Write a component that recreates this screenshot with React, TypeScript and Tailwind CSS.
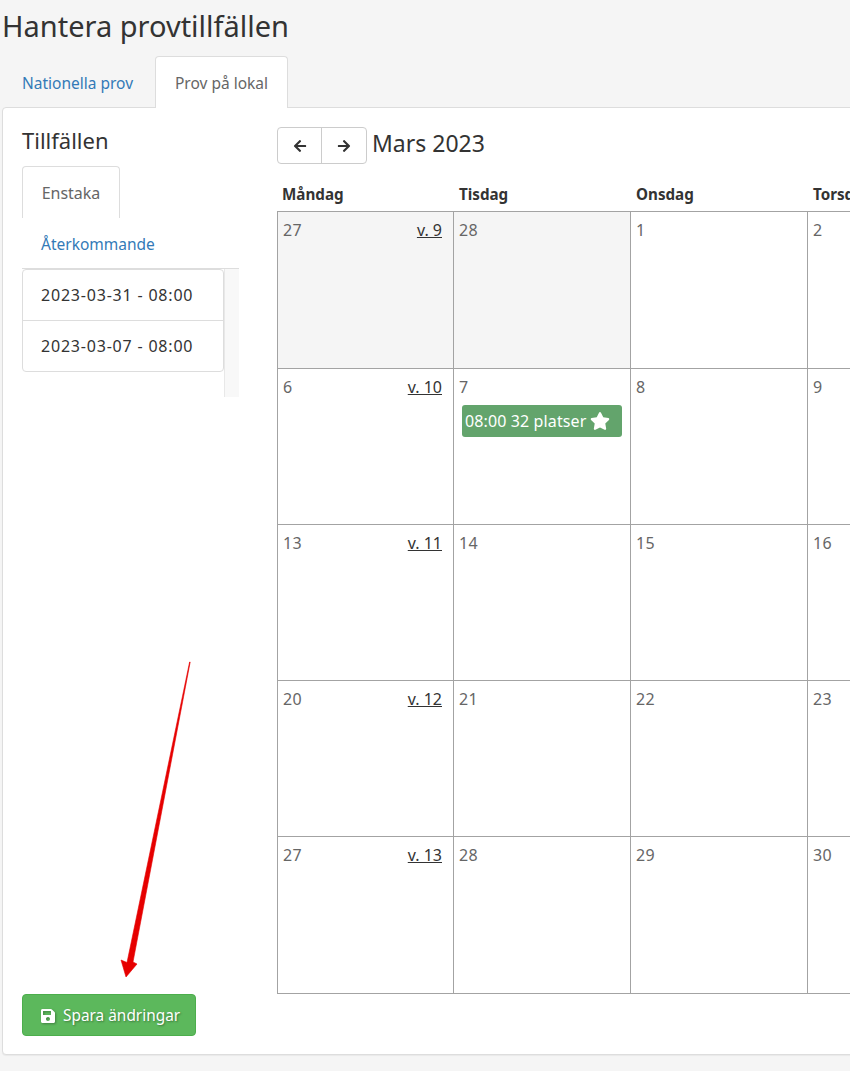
import { FaArrowLeft, FaArrowRight, FaSave, FaStar } from "react-icons/fa";

const weeks = [
  { label: "v. 9", days: [27, 28, 1, 2, 3, 4, 5], muted: [0, 1] },
  { label: "v. 10", days: [6, 7, 8, 9, 10, 11, 12], muted: [] },
  { label: "v. 11", days: [13, 14, 15, 16, 17, 18, 19], muted: [] },
  { label: "v. 12", days: [20, 21, 22, 23, 24, 25, 26], muted: [] },
  { label: "v. 13", days: [27, 28, 29, 30, 31, 1, 2], muted: [] },
];

const dayNames = ["Måndag", "Tisdag", "Onsdag", "Torsdag", "Fredag", "Lördag", "Söndag"];

function Calendar() {
  return (
    <div className="w-[1237px] shrink-0">
      <div className="flex items-center h-[37px]">
        <div className="flex h-[37px] rounded-[4px] border border-[#ccc] text-[#333]">
          <div className="w-[44px] flex items-center justify-center border-r border-[#ccc]">
            <FaArrowLeft size={14} />
          </div>
          <div className="w-[44px] flex items-center justify-center">
            <FaArrowRight size={14} />
          </div>
        </div>
        <h3 className="ml-[5px] pb-[5px] text-[23px] leading-[34px] text-[#333]">Mars 2023</h3>
      </div>
      <div className="grid grid-cols-[repeat(7,177px)] h-[47px]">
        {dayNames.map((d) => (
          <div key={d} className="pl-[5px] pt-[20px] text-[15.2px] leading-[20px] font-bold text-[#333]">
            {d}
          </div>
        ))}
      </div>
      <div className="border-t border-l border-[#a3a3a3] grid grid-cols-[176px_repeat(6,177px)]">
        {weeks.map((w, wi) =>
          w.days.map((d, i) => (
            <div
              key={`${wi}-${i}`}
              className={`border-r border-b border-[#a3a3a3] px-[5px] pt-[8px] ${
                wi === 0 || wi === 4 ? "h-[157px]" : "h-[156px]"
              } ${(w.muted as number[]).includes(i) ? "bg-[#f5f5f5]" : "bg-white"}`}
            >
              <div className="flex justify-between text-[16px] leading-[20px] tracking-[0.3px] text-[#666]">
                <span>{d}</span>
                {i === 0 && <span className="underline text-[#333] mr-[6px] tracking-normal">{w.label}</span>}
              </div>
              {wi === 1 && i === 1 && (
                <div className="mt-[8px] mx-[3px] h-[32px] rounded-[3px] bg-[#63a46c] text-white flex items-center pl-[3px] gap-[4px] text-[16px] tracking-[0.12px]">
                  08:00 32 platser
                  <FaStar size={20} />
                </div>
              )}
            </div>
          ))
        )}
      </div>
    </div>
  );
}

function Sidebar() {
  return (
    <div className="w-[217px] mr-[38px] shrink-0 flex flex-col justify-between">
      <div>
        <h3 className="-mt-px text-[22px] leading-[28px] text-[#333]">Tillfällen</h3>
        <div className="mt-[12px] w-[98px] h-[52px] border border-b-0 border-[#ddd] rounded-t-[4px] flex items-center justify-center text-[16px] text-[#666]">
          Enstaka
        </div>
        <div className="h-[50px] flex items-center pl-[19px] pt-[4px] text-[15.5px] text-[#337ab7]">
          Återkommande
        </div>
        <div className="flex h-[129px] border-t border-[#ddd]">
          <div className="w-[202px] h-[103px] border border-[#ddd] rounded-[4px] text-[16px] tracking-[0.8px] text-[#333] shrink-0">
            <div className="h-[51px] flex items-center pl-[18px] border-b border-[#ddd]">2023-03-31 - 08:00</div>
            <div className="h-[50px] flex items-center pl-[18px]">2023-03-07 - 08:00</div>
          </div>
          <div className="w-[15px] bg-[#f8f8f8] border-l border-[#e8e8e8]" />
        </div>
      </div>
      <div className="w-[174px] h-[42px] rounded-[4px] bg-[#5cb85c] border border-[#4cae4c] text-white flex items-center pl-[17px] pt-px gap-[7px] text-[15.4px] [text-shadow:1px_1px_2px_rgba(0,0,0,0.35)]">
        <FaSave size={16} className="drop-shadow-[1px_1px_1px_rgba(0,0,0,0.3)]" />
        Spara ändringar
      </div>
    </div>
  );
}

export default function App() {
  return (
    <div className="relative w-[850px] h-[1071px] overflow-hidden bg-[#f5f5f5] font-['Noto_Sans',sans-serif]">
      <h1 className="pl-[2px] pt-[5px] h-[56px] text-[29px] leading-[42px] text-[#333]">Hantera provtillfällen</h1>
      <div className="flex pl-[2px] h-[52px] text-[15.5px]">
        <div className="w-[153px] pt-[4px] pr-[2px] flex items-center justify-center text-[#337ab7]">Nationella prov</div>
        <div className="relative z-10 w-[133px] h-[52px] pt-[2px] bg-white border border-b-0 border-[#ddd] rounded-t-[4px] flex items-center justify-center text-[#666]">
          Prov på lokal
        </div>
      </div>
      <div className="ml-[2px] -mt-px w-[1600px] h-[948px] bg-white border border-[#ddd] rounded-[4px] shadow-[0_1px_1px_rgba(0,0,0,0.05)] pt-[19px] pl-[19px] pb-[18px] flex">
        <Sidebar />
        <Calendar />
      </div>
      {/* Red annotation arrow */}
      <svg className="absolute left-0 top-0 pointer-events-none" width="850" height="1071">
        <polygon
          points="189.6,662 190.2,662 133,962 137,964 126,977 121,960 127,962.5"
          fill="#e60000"
          stroke="#e60000"
          strokeWidth="0.6"
        />
      </svg>
    </div>
  );
}
